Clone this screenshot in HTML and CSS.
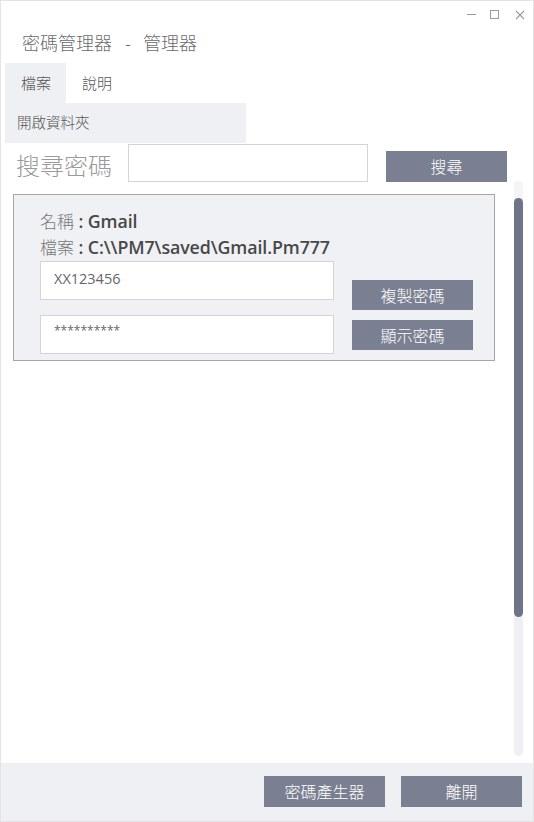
FILE: index.html
```html
<!DOCTYPE html>
<html lang="zh-Hant">
<head>
<meta charset="utf-8">
<title>密碼管理器</title>
<link rel="stylesheet" href="styles.css">
</head>
<body>
<div class="window">
  <div class="titlebar">
    <span class="ctl ctl-min"></span>
    <span class="ctl ctl-max"></span>
    <svg class="ctl-close" width="10" height="10" viewBox="0 0 10 10"><path d="M1 1L9 9M9 1L1 9" stroke="#9a9a9a" stroke-width="1.1" fill="none"/></svg>
  </div>
  <div class="apptitle">密碼管理器<span class="dash">-</span>管理器</div>
  <div class="menubar">
    <div class="menu-item active">檔案</div>
    <div class="menu-item">說明</div>
    <div class="dropdown">開啟資料夾</div>
  </div>
  <div class="main">
    <div class="search-row">
      <div class="search-label">搜尋密碼</div>
      <div class="search-input"></div>
      <div class="btn btn-search">搜尋</div>
    </div>
    <div class="list-area">
      <div class="list">
        <div class="card">
          <div class="line"><span class="lbl">名稱</span><b> : Gmail</b></div>
          <div class="line"><span class="lbl">檔案</span><b> : C:\\PM7\saved\Gmail.Pm777</b></div>
          <div class="card-row">
            <div class="fields">
              <div class="field">XX123456</div>
              <div class="field stars">**********</div>
            </div>
            <div class="actions">
              <div class="btn btn-card">複製密碼</div>
              <div class="btn btn-card">顯示密碼</div>
            </div>
          </div>
        </div>
      </div>
      <div class="scrollbar">
        <div class="track-top"></div>
        <div class="thumb"></div>
      </div>
    </div>
  </div>
  <div class="footer">
    <div class="btn btn-foot">密碼產生器</div>
    <div class="btn btn-foot">離開</div>
  </div>
</div>
</body>
</html>
```
FILE: styles.css
```css
* { box-sizing: border-box; }
html, body { margin: 0; padding: 0; background: #fff; }
body {
  font-family: "Noto Sans CJK TC", "Noto Sans", sans-serif;
  font-weight: 300;
  color: #555;
}
.window {
  width: 534px;
  height: 822px;
  border: 1px solid #e4e4e6;
  display: flex;
  flex-direction: column;
  position: relative;
  background: #fff;
}
.titlebar {
  height: 27px;
  display: flex;
  justify-content: flex-end;
  align-items: center;
  padding-right: 8px;
  gap: 14px;
}
.ctl-min {
  display: block;
  width: 9px;
  height: 1px;
  background: #9a9a9a;
}
.ctl-max {
  display: block;
  width: 9px;
  height: 9px;
  border: 1px solid #9a9a9a;
}
.ctl-close { display: block; margin-left: 2px; }
.apptitle {
  height: 35px;
  padding-left: 21px;
  font-size: 18px;
  line-height: 28px;
  color: #6a6a6a;
}
.apptitle .dash { margin: 0 12px 0 13px; }
.menubar {
  position: relative;
  height: 40px;
  display: flex;
  padding-left: 4px;
}
.menu-item {
  font-size: 15px;
  line-height: 40px;
  padding: 0 15px 0 16px;
  color: #555;
}
.menu-item.active { background: #eef0f3; }
.dropdown {
  position: absolute;
  left: 4px;
  top: 40px;
  width: 241px;
  height: 40px;
  background: #eef0f3;
  font-size: 14.5px;
  line-height: 38px;
  padding-left: 12px;
  color: #555;
  z-index: 2;
}
.main {
  flex: 1;
  padding-top: 41px;
  display: flex;
  flex-direction: column;
}
.search-row {
  display: flex;
  align-items: flex-start;
  height: 37px;
  padding-left: 15px;
}
.search-label {
  font-size: 24px;
  line-height: 40px;
  color: #9a9a9a;
  width: 112px;
  margin-top: 1px;
}
.search-input {
  width: 240px;
  height: 38px;
  border: 1px solid #d4d4d4;
  background: #fff;
}
.btn {
  background: #7a7f91;
  color: #fff;
  font-size: 16px;
  text-align: center;
}
.btn-search {
  width: 121px;
  height: 31px;
  line-height: 31px;
  margin-left: 18px;
  margin-top: 7px;
}
.list-area {
  flex: 1;
  display: flex;
  padding-left: 12px;
  padding-bottom: 7px;
}
.list {
  flex: 1;
  padding-top: 13px;
}
.card {
  width: 482px;
  height: 167px;
  background: #f0f1f4;
  border: 1px solid #a6a6a8;
  padding: 13px 0 0 26px;
}
.line {
  font-size: 17px;
  line-height: 26px;
  height: 26px;
  color: #444;
}
.line .lbl { color: #777; }
.line b {
  font-family: "Open Sans", "Noto Sans", sans-serif;
  font-weight: 600;
  font-size: 17.8px;
  line-height: 26px;
  color: #484848;
  letter-spacing: -0.1px;
}
.card-row {
  display: flex;
  margin-top: 1px;
}
.fields {
  display: flex;
  flex-direction: column;
  gap: 15px;
}
.field {
  width: 294px;
  height: 39px;
  background: #fff;
  border: 1px solid #d4d4d4;
  font-family: "Open Sans", "Noto Sans", sans-serif;
  font-weight: 400;
  font-size: 14.5px;
  line-height: 34px;
  padding-left: 13px;
  color: #666;
}
.field.stars { font-size: 12px; line-height: 30px; }
.actions {
  display: flex;
  flex-direction: column;
  gap: 10px;
  margin-left: 18px;
  margin-top: 19px;
}
.btn-card {
  width: 121px;
  height: 30px;
  line-height: 30px;
}
.scrollbar {
  width: 9px;
  margin-right: 10px;
  margin-top: 0;
  background: #eef0f3;
  border-radius: 5px;
  display: flex;
  flex-direction: column;
}
.track-top { height: 17px; background: #f4f5f7; border-radius: 5px 5px 0 0; }
.thumb {
  height: 419px;
  background: #6f7489;
  border-radius: 5px;
}
.footer {
  height: 58px;
  background: #eff0f3;
  display: flex;
  justify-content: flex-end;
  align-items: flex-start;
  padding-top: 13px;
  padding-right: 11px;
  gap: 16px;
}
.btn-foot {
  width: 121px;
  height: 31px;
  line-height: 31px;
}
```
